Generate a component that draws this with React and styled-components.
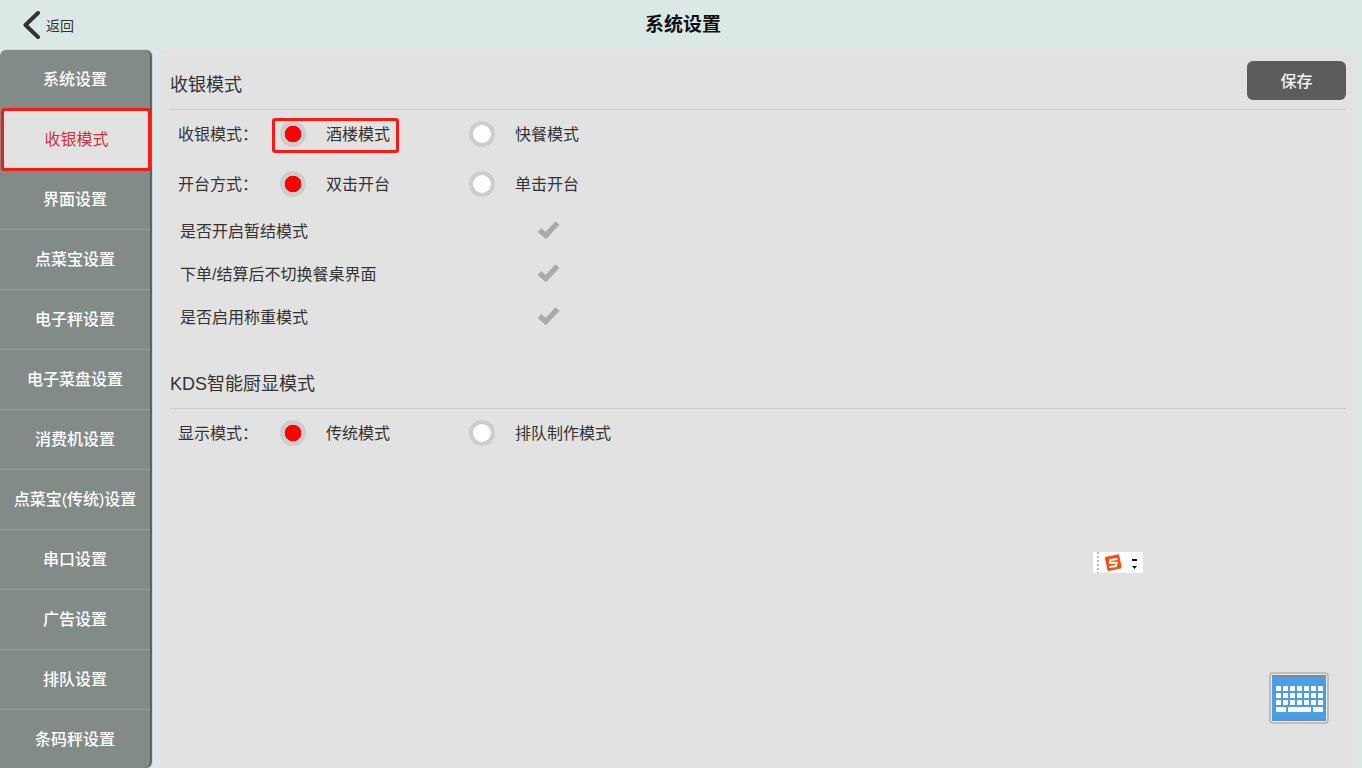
import styled, { createGlobalStyle } from "styled-components";

const FONT = `"Liberation Sans", "Noto Sans CJK SC", sans-serif`;

const GlobalStyle = createGlobalStyle`
  html, body {
    margin: 0;
    padding: 0;
    height: 768px;
    overflow: hidden;
    background: #dbe8e5;
    font-family: ${FONT};
  }
`;

const Page = styled.div`
  width: 1362px;
  height: 768px;
  position: relative;
  overflow: hidden;
  background: #dbe8e5;
`;

const Header = styled.header`
  height: 50px;
  box-sizing: border-box;
  padding-left: 4px;
  display: flex;
  align-items: center;
  justify-content: center;
  position: relative;
`;

const BackLink = styled.a`
  position: absolute;
  left: 22px;
  top: 11px;
  display: flex;
  align-items: center;
  gap: 6px;
  font-size: 14px;
  color: #333;
`;

const Title = styled.h1`
  margin: 0;
  font-size: 19px;
  line-height: 50px;
  font-weight: 700;
  color: #111;
`;

const Body = styled.div`
  display: flex;
  height: 718px;
`;

const Sidebar = styled.nav`
  width: 150px;
  flex: none;
  background: #838b89;
  border-radius: 6px 6px 6px 0;
  box-shadow: 2px 0 1px #555c5a;
`;

const NavItem = styled.div`
  box-sizing: border-box;
  height: ${(p) => (p.$active ? "63px" : "60px")};
  margin: ${(p) => (p.$active ? "-2px -1px -1px 1px" : "0")};
  padding: ${(p) => (p.$active ? "0 0 3px 1px" : "0 0 3px 0")};
  display: flex;
  align-items: center;
  justify-content: center;
  font-size: 16px;
  font-weight: ${(p) => (p.$active ? 400 : 500)};
  color: ${(p) => (p.$active ? "#d2303a" : "#fff")};
  background: ${(p) => (p.$active ? "#e2e2e2" : "transparent")};
  border: ${(p) => (p.$active ? "3px solid #fb1a12" : "none")};
  border-bottom: ${(p) => (p.$active ? "3px solid #fb1a12" : "1px solid #979e9c")};
  border-radius: ${(p) => (p.$active ? "3px" : "0")};
  position: relative;
  z-index: ${(p) => (p.$active ? 1 : 0)};
  &:last-child {
    border-bottom-color: transparent;
  }
`;

const Main = styled.main`
  margin-left: 10px;
  width: 1195px;
  box-sizing: border-box;
  padding: 0 9px 0 10px;
  background: #e2e2e2;
  border-radius: 6px 0 0 0;
  color: #333;
`;

const SectionHead = styled.div`
  height: ${(p) => p.$height}px;
  box-sizing: border-box;
  margin-bottom: -1px;
  display: flex;
  align-items: flex-end;
  justify-content: space-between;
  border-bottom: 1px solid #ccc;
  padding-bottom: 11px;
  position: relative;
`;

const SectionTitle = styled.h2`
  margin: 0;
  font-size: 18px;
  line-height: 26px;
  font-weight: 400;
  color: #333;
`;

const SaveButton = styled.button`
  position: absolute;
  right: 0;
  top: 11px;
  width: 99px;
  height: 39px;
  border: none;
  border-radius: 6px;
  background: #5c5c5c;
  color: #f2f2f2;
  font-family: inherit;
  font-size: 16px;
  font-weight: 500;
  padding: 0 0 2px;
`;

const RadioRow = styled.div`
  display: flex;
  align-items: center;
  height: 50px;
  padding-left: 8px;
  font-size: 16px;
`;

const RowLabel = styled.span`
  width: 102px;
  flex: none;
  padding-bottom: 2px;
`;

const Option = styled.label`
  width: 189px;
  flex: none;
  display: flex;
  align-items: center;
  gap: 20px;
  position: relative;
`;

const OptionText = styled.span`
  padding-bottom: 2px;
`;

const Highlight = styled.span`
  position: absolute;
  left: -8px;
  top: -3px;
  width: 127px;
  height: 35px;
  box-sizing: border-box;
  border: 3px solid #fb1a12;
  border-radius: 3px;
`;

const Radio = styled.span`
  width: 26px;
  height: 26px;
  box-sizing: border-box;
  border-radius: 50%;
  flex: none;
  border: 4px solid #cdcdcd;
  background: ${(p) =>
    p.$checked ? "radial-gradient(circle, #fe0000 0 8px, #cdcdcd 8.6px)" : "#fff"};
`;

const CheckList = styled.div`
  padding-left: 10px;
`;

const CheckRow = styled.div`
  height: 43px;
  display: flex;
  align-items: center;
  font-size: 16px;
`;

const CheckLabel = styled.span`
  width: 357px;
  flex: none;
  padding-bottom: 2px;
`;

const CheckSvg = styled.svg`
  margin-bottom: 2px;
`;

const KeyboardButton = styled.div`
  position: absolute;
  left: 1269px;
  top: 672px;
  width: 60px;
  height: 52px;
  box-sizing: border-box;
  padding: 1px;
  border: 2px solid #bdbdbd;
  border-radius: 4px;
  background: #e8e8e8;
`;

const ImeBar = styled.div`
  position: absolute;
  left: 1093px;
  top: 552px;
  width: 50px;
  height: 21px;
  background: #fff;
  display: flex;
  align-items: center;
`;

const BackIcon = () => (
  <svg width="18" height="28" viewBox="0 0 18 28">
    <path d="M16 2 L3.5 14 L16 26" fill="none" stroke="#333" strokeWidth="4" strokeLinecap="round" strokeLinejoin="round" />
  </svg>
);

const CheckIcon = () => (
  <CheckSvg width="23" height="19" viewBox="0 0 23 19">
    <path d="M2.5 10 L8.8 15.5 L20.5 3" fill="none" stroke="#aaa" strokeWidth="5.4" strokeLinejoin="miter" />
  </CheckSvg>
);

const KeyboardIcon = () => {
  const keys = [];
  for (let row = 0; row < 3; row++) {
    for (let col = 0; col < 7; col++) {
      keys.push(<rect key={`${row}-${col}`} x={4 + col * 7} y={11 + row * 7} width="5" height="5" fill="#fff" />);
    }
  }
  return (
    <svg width="54" height="46" viewBox="0 0 54 46" style={{ display: "block" }}>
      <rect width="54" height="46" fill="#4a9ee8" />
      <rect width="54" height="2" fill="#7a8c9c" />
      <rect y="44" width="54" height="2" fill="#7a8c9c" />
      {keys}
      <rect x="4" y="32" width="10" height="5" fill="#fff" />
      <rect x="16" y="32" width="23" height="5" fill="#fff" />
      <rect x="41" y="32" width="10" height="5" fill="#fff" />
    </svg>
  );
};

const ImeIcon = () => (
  <svg width="50" height="21" viewBox="0 0 50 21">
    <path d="M5 0v21" stroke="#bbb" strokeWidth="2" strokeDasharray="2 2" />
    <rect x="13" y="3.5" width="14.5" height="14.5" rx="1.5" fill="#f4500f" transform="rotate(-12 20 10.5)" />
    <path d="M24.5 7 L17.5 8 L17 10.8 L23.5 10.8 L23 14 L16 15" fill="none" stroke="#fff" strokeWidth="2" />
    <rect x="39" y="7" width="5" height="2" fill="#111" />
    <path d="M39 14 h5 l-2.5 3 z" fill="#111" />
  </svg>
);

const navItems = [
  "系统设置",
  "收银模式",
  "界面设置",
  "点菜宝设置",
  "电子秤设置",
  "电子菜盘设置",
  "消费机设置",
  "点菜宝(传统)设置",
  "串口设置",
  "广告设置",
  "排队设置",
  "条码秤设置",
];

const checks = ["是否开启暂结模式", "下单/结算后不切换餐桌界面", "是否启用称重模式"];

const RadioGroup = ({ label, first, second, highlight }) => (
  <RadioRow>
    <RowLabel>{label}</RowLabel>
    <Option>
      {highlight && <Highlight />}
      <Radio $checked />
      <OptionText>{first}</OptionText>
    </Option>
    <Option>
      <Radio />
      <OptionText>{second}</OptionText>
    </Option>
  </RadioRow>
);

export default function App() {
  return (
    <Page>
      <GlobalStyle />
      <Header>
        <BackLink>
          <BackIcon />
          返回
        </BackLink>
        <Title>系统设置</Title>
      </Header>
      <Body>
        <Sidebar>
          {navItems.map((item, index) => (
            <NavItem key={item} $active={index === 1}>
              {item}
            </NavItem>
          ))}
        </Sidebar>
        <Main>
          <SectionHead $height={60}>
            <SectionTitle>收银模式</SectionTitle>
            <SaveButton>保存</SaveButton>
          </SectionHead>
          <RadioGroup label="收银模式：" first="酒楼模式" second="快餐模式" highlight />
          <RadioGroup label="开台方式：" first="双击开台" second="单击开台" />
          <CheckList>
            {checks.map((item) => (
              <CheckRow key={item}>
                <CheckLabel>{item}</CheckLabel>
                <CheckIcon />
              </CheckRow>
            ))}
          </CheckList>
          <SectionHead $height={71}>
            <SectionTitle>KDS智能厨显模式</SectionTitle>
          </SectionHead>
          <RadioGroup label="显示模式：" first="传统模式" second="排队制作模式" />
        </Main>
      </Body>
      <ImeBar>
        <ImeIcon />
      </ImeBar>
      <KeyboardButton>
        <KeyboardIcon />
      </KeyboardButton>
    </Page>
  );
}
